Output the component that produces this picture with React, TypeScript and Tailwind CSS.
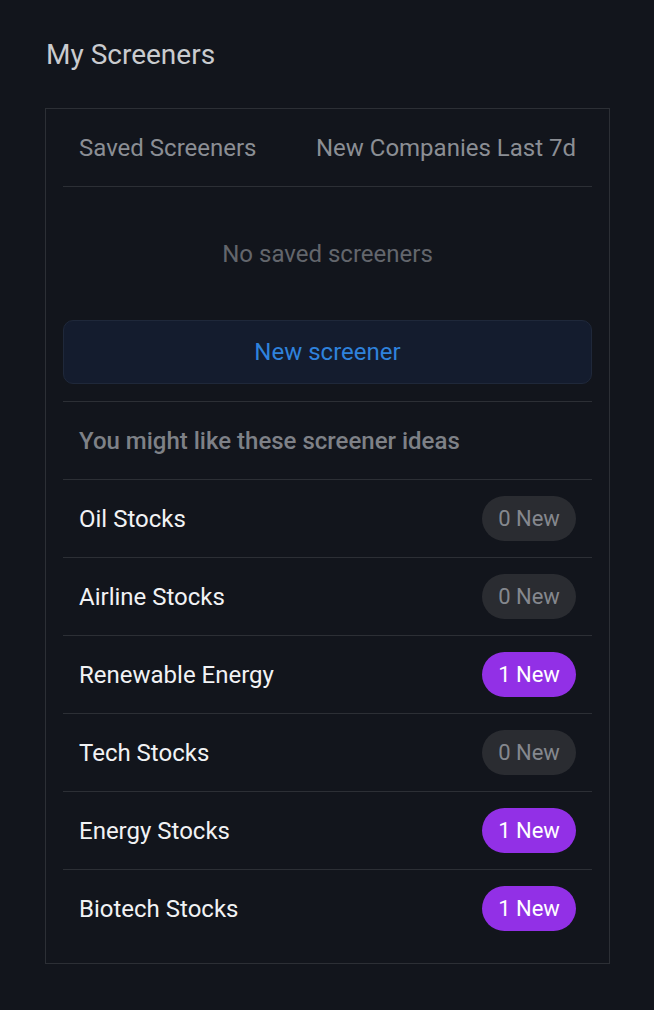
const ideas = [
  { name: "Oil Stocks", count: 0 },
  { name: "Airline Stocks", count: 0 },
  { name: "Renewable Energy", count: 1 },
  { name: "Tech Stocks", count: 0 },
  { name: "Energy Stocks", count: 1 },
  { name: "Biotech Stocks", count: 1 },
];

export default function App() {
  return (
    <div className="min-h-[1010px] w-full bg-[#12151c] pl-[45px] pr-[44px] pt-[37px] font-['Roboto',sans-serif]">
      {/* Heading */}
      <h1 className="ml-px text-[28px] leading-9 text-[#c9cbcf]">My Screeners</h1>

      {/* Panel */}
      <div className="mt-[35px] border border-[#2c2f35] px-[17px] pb-4">
        {/* Tabs */}
        <div className="flex h-[78px] items-center justify-between border-b border-[#2c2f35] px-4 text-[24px] text-[#8b8e94]">
          <span>Saved Screeners</span>
          <span>New Companies Last 7d</span>
        </div>

        <div className="flex h-[133px] items-center justify-center text-[24px] text-[#63666c]">
          No saved screeners
        </div>

        <button className="flex h-16 w-full items-center justify-center rounded-[10px] border border-[#1f283a] bg-[#141c2e] text-[24px] text-[#2f82dc]">
          New screener
        </button>

        <div className="mt-[17px] flex h-[78px] items-center border-t border-[#2c2f35] px-4 text-[24px] font-medium text-[#7e8187]">
          You might like these screener ideas
        </div>

        {ideas.map((idea) => (
          <div
            key={idea.name}
            className="flex h-[78px] items-center justify-between border-t border-[#2c2f35] px-4"
          >
            <span className="text-[24px] text-[#f1f2f4]">{idea.name}</span>
            {idea.count > 0 ? (
              <span className="flex h-[45px] w-[94px] items-center justify-center rounded-full bg-[#9230e6] text-[22px] text-white">
                {idea.count} New
              </span>
            ) : (
              <span className="flex h-[45px] w-[94px] items-center justify-center rounded-full bg-[#2a2c31] text-[22px] text-[#85888e]">
                {idea.count} New
              </span>
            )}
          </div>
        ))}
      </div>
    </div>
  );
}
